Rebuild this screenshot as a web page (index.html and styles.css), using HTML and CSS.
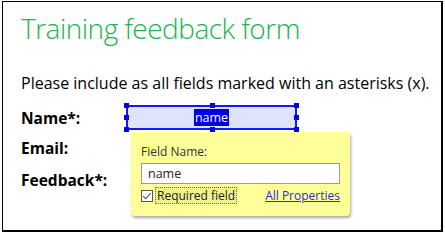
FILE: index.html
```html
<!DOCTYPE html>
<html>
<head>
<meta charset="utf-8">
<link rel="stylesheet" href="styles.css">
</head>
<body>
<div class="frame">
  <h1 class="title">Training feedback form</h1>
  <p class="intro">Please include as all fields marked with an asterisks (x).</p>
  <div class="form">
    <div class="label">Name*:</div>
    <div class="field-cell">
      <div class="field-box">
        <span class="sel-text">name</span>
        <span class="h h-tl"></span><span class="h h-tm"></span><span class="h h-tr"></span>
        <span class="h h-ml"></span><span class="h h-mr"></span>
        <span class="h h-bl"></span><span class="h h-bm"></span><span class="h h-br"></span>
      </div>
    </div>
    <div class="label">Email:</div>
    <div class="field-cell"></div>
    <div class="label">Feedback*:</div>
    <div class="field-cell"></div>
  </div>
  <div class="popup">
    <div class="pop-label">Field Name:</div>
    <div class="pop-input">name</div>
    <div class="pop-row">
      <label class="req">
        <span class="checkbox"><svg width="10" height="10" viewBox="0 0 10 10"><path d="M1.2 5.2 L3.8 7.8 L8.8 2" fill="none" stroke="#444" stroke-width="1.1"/></svg></span>
        <span class="req-text">Required field</span>
      </label>
      <a class="props" href="#">All Properties</a>
    </div>
  </div>
</div>
</body>
</html>
```
FILE: styles.css
```css
html, body {
  margin: 0;
  padding: 0;
  background: #ffffff;
}
.frame {
  position: relative;
  box-sizing: border-box;
  width: 441px;
  height: 231px;
  margin: 1px 0 0 2px;
  border: 1px solid #000;
  border-right-width: 2px;
  border-bottom-width: 2px;
  padding: 0 0 0 18px;
  font-family: "Open Sans", "Liberation Sans", sans-serif;
  color: #000;
}
.title {
  margin: 7px 0 0 0;
  font-size: 28px;
  font-weight: 300;
  line-height: 38px;
  color: #22b24f;
  letter-spacing: -0.5px;
}
.intro {
  margin: 25px 0 0 0;
  font-size: 16px;
  line-height: 22px;
}
.form {
  display: grid;
  grid-template-columns: 105px 172px;
  grid-template-rows: 30px 32px 30px;
  margin-top: 11px;
}
.label {
  font-weight: 700;
  font-size: 15.5px;
  line-height: 26px;
}
.field-box {
  position: relative;
  box-sizing: border-box;
  height: 25px;
  width: 171px;
  margin-top: 0;
  background: #dde4fb;
  border: 2px solid #1515ff;
  display: flex;
  justify-content: center;
  align-items: center;
}
.sel-text {
  background: #0000e6;
  color: #fff;
  font-size: 12.5px;
  line-height: 17px;
  padding: 0 1px;
  font-family: "Open Sans", sans-serif;
}
.h {
  position: absolute;
  width: 5px;
  height: 5px;
  background: #0000ee;
}
.h-tl { left: -4px; top: -4px; }
.h-tm { left: 82px; top: -4px; }
.h-tr { right: -4px; top: -4px; }
.h-ml { left: -4px; top: 8px; }
.h-mr { right: -4px; top: 8px; }
.h-bl { left: -4px; bottom: -4px; }
.h-bm { left: 82px; bottom: -4px; }
.h-br { right: -4px; bottom: -4px; }
.popup {
  position: absolute;
  left: 128px;
  top: 130px;
  box-sizing: border-box;
  width: 219px;
  height: 84px;
  background: #ffff99;
  border-radius: 4px;
  box-shadow: 1px 2px 3px rgba(0,0,0,0.35);
  padding: 11px 10px 0 10px;
  font-size: 12px;
  color: #333;
  display: flex;
  flex-direction: column;
}
.pop-label {
  line-height: 17px;
}
.pop-input {
  box-sizing: border-box;
  margin-top: 3px;
  height: 21px;
  background: #fff;
  border: 1px solid #9a9a9a;
  padding: 0 6px;
  line-height: 19px;
  font-size: 12.5px;
  color: #222;
}
.pop-row {
  margin-top: 3px;
  display: flex;
  justify-content: space-between;
  align-items: center;
}
.req {
  display: flex;
  align-items: center;
  gap: 2px;
}
.checkbox {
  box-sizing: border-box;
  width: 12px;
  height: 12px;
  border: 1px solid #555;
  background: #fff;
  display: flex;
  align-items: center;
  justify-content: center;
}
.req-text {
  border: 1px dotted #666;
  background: #f3f18f;
  padding: 0 1px;
  line-height: 15px;
  color: #222;
}
.props {
  color: #2a2ad6;
  text-decoration: underline;
}
```
